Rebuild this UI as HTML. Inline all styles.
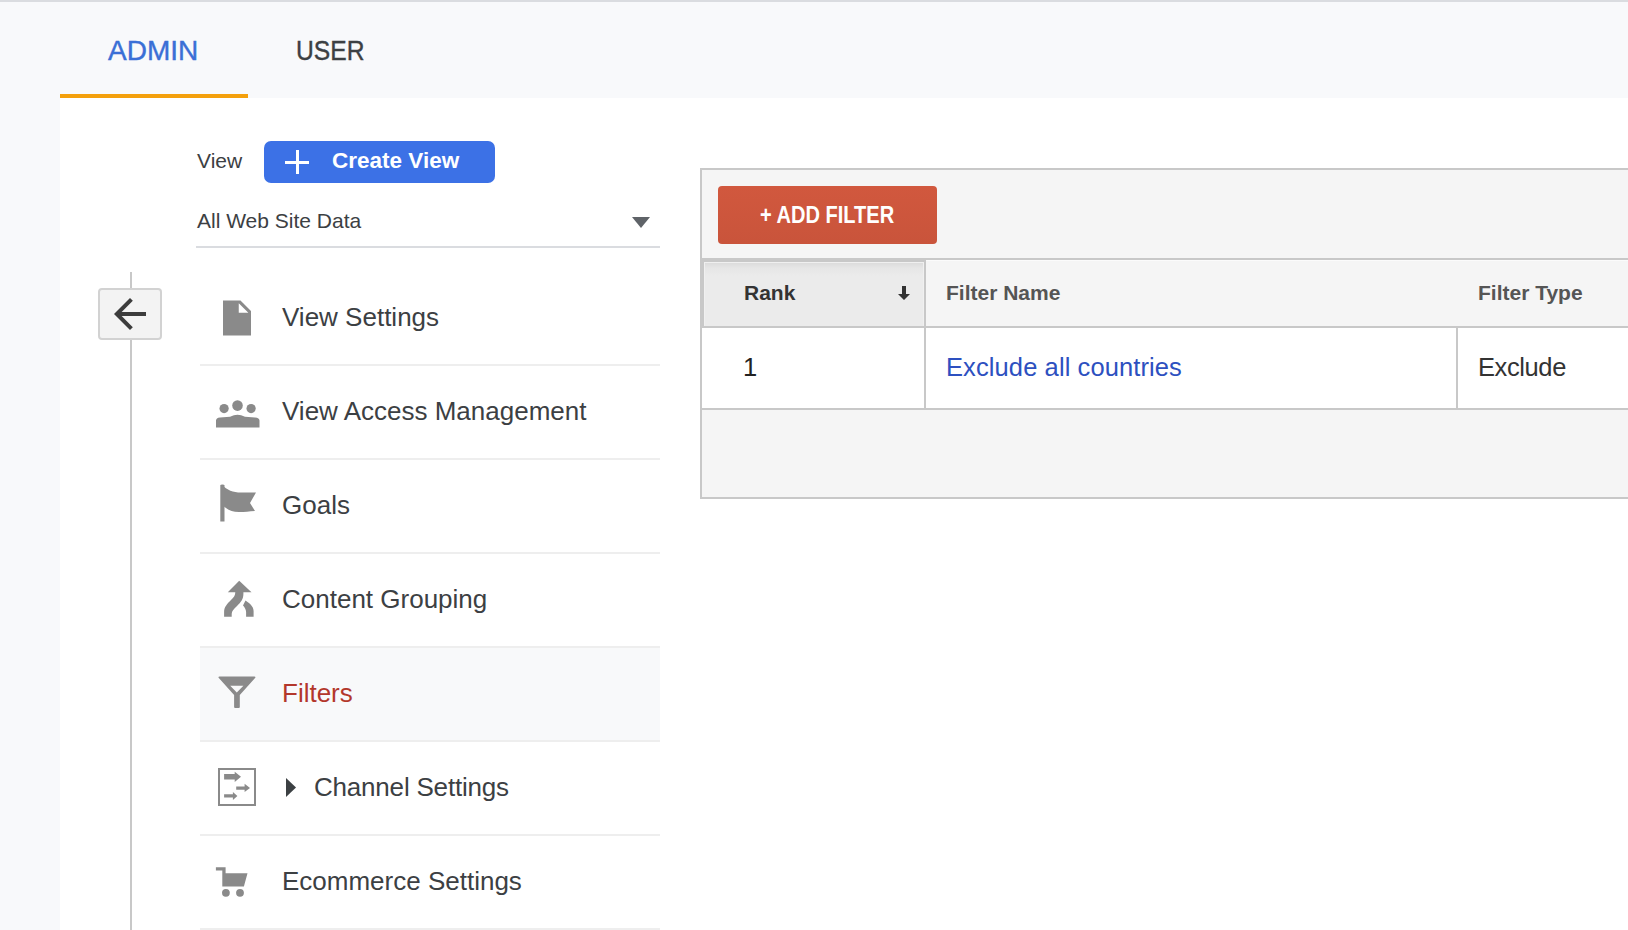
<!DOCTYPE html>
<html><head><meta charset="utf-8">
<style>
*{margin:0;padding:0;box-sizing:border-box}
html,body{width:1628px;height:930px;overflow:hidden}
body{background:#f8f9fb;font-family:"Liberation Sans",sans-serif;position:relative}
.a{position:absolute}
.t{position:absolute;white-space:nowrap;line-height:1}
</style></head><body>
<!-- top border -->
<div class="a" style="left:0;top:0;width:1628px;height:2px;background:#dadce0"></div>
<!-- tabs -->
<div class="t" style="left:108px;top:37px;font-size:28px;color:#3a6fd6;-webkit-text-stroke:0.4px #3a6fd6">ADMIN</div>
<div class="t" style="left:296px;top:37px;font-size:28px;color:#3c4043;-webkit-text-stroke:0.4px #3c4043;transform:scaleX(0.88);transform-origin:0 0">USER</div>
<div class="a" style="left:60px;top:94px;width:188px;height:4px;background:#f4a00c"></div>
<!-- white panel -->
<div class="a" style="left:60px;top:98px;width:1568px;height:832px;background:#fff"></div>

<!-- view selector -->
<div class="t" style="left:197px;top:150px;font-size:21px;color:#3c4043">View</div>
<div class="a" style="left:264px;top:141px;width:231px;height:42px;background:#3c71e6;border-radius:7px"></div>
<div class="a" style="left:285px;top:160.5px;width:24px;height:3px;background:#fff"></div>
<div class="a" style="left:295.5px;top:150px;width:3px;height:24px;background:#fff"></div>
<div class="t" style="left:332px;top:150px;font-size:22.5px;font-weight:bold;color:#fff">Create View</div>
<div class="t" style="left:197px;top:210px;font-size:21px;color:#3c4043">All Web Site Data</div>
<svg class="a" style="left:632px;top:217px" width="18" height="11" viewBox="0 0 18 11"><path d="M0 0H18L9 11Z" fill="#5f6368"/></svg>
<div class="a" style="left:196px;top:246px;width:464px;height:2px;background:#dadce0"></div>

<!-- sidebar line + back -->
<div class="a" style="left:130px;top:272px;width:2px;height:658px;background:#c8c8c8"></div>
<div class="a" style="left:98px;top:288px;width:64px;height:52px;background:#f3f3f3;border:2px solid #d2d2d2;border-radius:4px"></div>
<svg class="a" style="left:106px;top:290px" width="48" height="48" viewBox="0 0 24 24"><path d="M20 11H7.83l5.59-5.59L12 4l-8 8 8 8 1.41-1.41L7.83 13H20v-2z" fill="#3c3c3c"/></svg>

<!-- sidebar rows -->
<div class="a" style="left:200px;top:646px;width:460px;height:95px;background:#f8f9fa"></div>
<div class="a" style="left:200px;top:364px;width:460px;height:2px;background:#eeeeee"></div>
<div class="a" style="left:200px;top:458px;width:460px;height:2px;background:#eeeeee"></div>
<div class="a" style="left:200px;top:552px;width:460px;height:2px;background:#eeeeee"></div>
<div class="a" style="left:200px;top:646px;width:460px;height:2px;background:#eeeeee"></div>
<div class="a" style="left:200px;top:740px;width:460px;height:2px;background:#eeeeee"></div>
<div class="a" style="left:200px;top:834px;width:460px;height:2px;background:#eeeeee"></div>
<div class="a" style="left:200px;top:928px;width:460px;height:2px;background:#eeeeee"></div>

<div class="t" style="left:282px;top:304px;font-size:26px;color:#3c4043">View Settings</div>
<div class="t" style="left:282px;top:398px;font-size:26px;color:#3c4043">View Access Management</div>
<div class="t" style="left:282px;top:492px;font-size:26px;color:#3c4043">Goals</div>
<div class="t" style="left:282px;top:586px;font-size:26px;color:#3c4043">Content Grouping</div>
<div class="t" style="left:282px;top:680px;font-size:26px;color:#b3372b">Filters</div>
<div class="t" style="left:314px;top:774px;font-size:26px;color:#3c4043;letter-spacing:-0.2px">Channel Settings</div>
<div class="t" style="left:282px;top:868px;font-size:26px;color:#3c4043">Ecommerce Settings</div>

<!-- icons -->
<svg class="a" style="left:216px;top:296.5px" width="42" height="42" viewBox="0 0 24 24"><path d="M4 2H14L20 8V22H4ZM13 9V3.5L18.5 9Z" fill-rule="evenodd" fill="#8a8a8a"/></svg>
<svg class="a" style="left:210px;top:390px" width="56" height="46" viewBox="0 0 56 46"><circle cx="14.1" cy="18.6" r="4.6" fill="#8a8a8a"/><circle cx="27.5" cy="15.6" r="5.3" fill="#8a8a8a"/><circle cx="41.1" cy="18.6" r="4.6" fill="#8a8a8a"/><path d="M6 37.6V30.5Q6 27.8 10 27.4L20 26.8Q24 24.7 27.5 24.7Q31 24.7 35 26.8L45 27.4Q49.5 27.8 49.5 30.5V37.6Z" fill="#8a8a8a"/></svg>
<svg class="a" style="left:219px;top:484px" width="38" height="38" viewBox="0 0 38 38"><path d="M1.3 1.5Q1.3 0.5 3.3 0.5Q5.5 0.5 5.5 1.5V37.5H1.3Z" fill="#8a8a8a"/><path d="M3 1C8 6 14 8.5 22 8.5L37 8.5L31 19L36 27C30 27.5 26 28 20 28C12 28 8 25 3 21Z" fill="#8a8a8a"/></svg>
<svg class="a" style="left:210px;top:570px" width="56" height="56" viewBox="0 0 56 56"><path d="M17.8 22.3L29.2 10.8L41.5 22.3Z" fill="#8a8a8a"/><path d="M25.3 21H33.4V24C33.4 29 31 32 27 36C23.5 39.5 21.7 41 21.7 44V46.7H14.1V42C14.1 37 17 34 21 30C24 27 25.3 25.5 25.3 22Z" fill="#8a8a8a"/><path d="M35.5 30.5C39 33 43.6 36 43.6 41V46.7H36.1V42C36.1 39.5 34.5 37 33 35.5Z" fill="#8a8a8a"/></svg>
<svg class="a" style="left:210px;top:665px" width="56" height="56" viewBox="0 0 56 56"><path fill-rule="evenodd" d="M8.4 12.4Q8.4 11.4 9.6 11.4H44.3Q45.5 11.4 45.5 12.4L29.8 30V42Q29.8 43 28.8 43H25.1Q24.1 43 24.1 42V30ZM20.2 20.8H33.4L26.8 27.4Z" fill="#8a8a8a"/></svg>
<svg class="a" style="left:218px;top:768px" width="38" height="38" viewBox="0 0 38 38"><rect x="1" y="1" width="36" height="36" fill="none" stroke="#8a8a8a" stroke-width="2"/><path d="M6.1 6.1H16.7V3.7L23 8.85L16.7 14V11.6H6.1Z" fill="#8a8a8a"/><path d="M18.2 18.5H26.6V15.8L32 19.9L26.6 23.9V21.8H18.2Z" fill="#8a8a8a"/><path d="M6.1 26.3H14.9V23.9L19.4 27.95L14.9 32V29.6H6.1Z" fill="#8a8a8a"/></svg>
<svg class="a" style="left:286px;top:778px" width="11" height="20" viewBox="0 0 11 20"><path d="M0 0L10 9.5L0 19Z" fill="#3c4043"/></svg>
<svg class="a" style="left:206px;top:854px" width="56" height="56" viewBox="0 0 56 56"><path d="M9.9 13.2H19.6V19.3H41.5L37.9 32.5H16.3V16.6H9.9Z" fill="#8a8a8a"/><circle cx="19.9" cy="38.8" r="3.9" fill="#8a8a8a"/><circle cx="34" cy="38.8" r="3.9" fill="#8a8a8a"/></svg>

<!-- table -->
<div class="a" style="left:700px;top:168px;width:940px;height:331px;background:#f5f5f5;border:2px solid #c8c8c8"></div>
<div class="a" style="left:718px;top:186px;width:219px;height:58px;background:linear-gradient(#d1583e,#c9543b);border-radius:4px"></div>
<div class="t" style="left:760px;top:203px;font-size:24px;font-weight:bold;color:#fff;transform:scaleX(0.835);transform-origin:0 0">+ ADD FILTER</div>

<div class="a" style="left:702px;top:258px;width:926px;height:2px;background:#c8c8c8"></div>
<div class="a" style="left:702px;top:260px;width:926px;height:1px;background:#fbfbfb"></div>
<div class="a" style="left:702px;top:260px;width:2px;height:66px;background:#c8c8c8"></div>
<div class="a" style="left:702px;top:260px;width:222px;height:2px;background:#c8c8c8"></div>
<div class="a" style="left:704px;top:262px;width:220px;height:64px;background:linear-gradient(#dadada,#e6e6e6 6px,#ebebeb 14px);box-shadow:inset 1px 1px 0 #f0f0f0,inset -1px 0 0 #f0f0f0"></div>
<div class="a" style="left:924px;top:258px;width:2px;height:152px;background:#c8c8c8"></div>
<div class="a" style="left:702px;top:326px;width:926px;height:2px;background:#c8c8c8"></div>
<div class="a" style="left:702px;top:328px;width:926px;height:80px;background:#fff"></div>
<div class="a" style="left:924px;top:328px;width:2px;height:80px;background:#c8c8c8"></div>
<div class="a" style="left:1456px;top:328px;width:2px;height:80px;background:#c8c8c8"></div>
<div class="a" style="left:702px;top:408px;width:926px;height:2px;background:#c8c8c8"></div>

<div class="t" style="left:744px;top:282px;font-size:21px;font-weight:bold;color:#333">Rank</div>
<svg class="a" style="left:898px;top:286px" width="12" height="14" viewBox="0 0 12 14"><path d="M4 0H8V8H12L6 14L0 8H4Z" fill="#333"/></svg>
<div class="t" style="left:946px;top:282px;font-size:21px;font-weight:bold;color:#555">Filter Name</div>
<div class="t" style="left:1478px;top:282px;font-size:21px;font-weight:bold;color:#555">Filter Type</div>

<div class="t" style="left:743px;top:355px;font-size:25.5px;color:#222">1</div>
<div class="t" style="left:946px;top:355px;font-size:25.5px;color:#2d50c0;letter-spacing:0.1px">Exclude all countries</div>
<div class="t" style="left:1478px;top:355px;font-size:25.5px;color:#333;letter-spacing:-0.4px">Exclude</div>
</body></html>
